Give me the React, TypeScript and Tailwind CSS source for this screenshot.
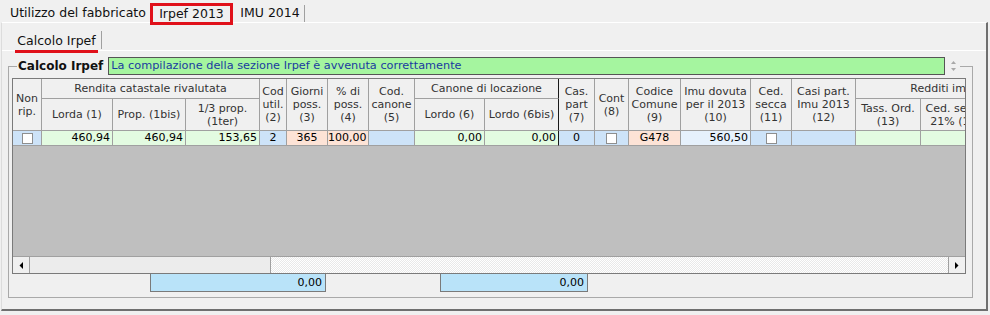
import React from "react";

const HB = "flex items-center justify-center text-center border-r border-b border-[#a0a0a0] leading-[13px] text-[#333] overflow-hidden whitespace-nowrap";
const DB = "h-[15px] border-r border-b border-[#a0a0a0] leading-[14px] overflow-hidden whitespace-nowrap text-black";

function Check() {
  return <div className="w-[11px] h-[11px] border border-[#8e8f8f] bg-white" />;
}

function Arrow({ dir }: { dir: "l" | "r" }) {
  return (
    <svg width="4" height="7" viewBox="0 0 4 7">
      <path d={dir === "l" ? "M4 0 L0.5 3.5 L4 7Z" : "M0 0 L3.5 3.5 L0 7Z"} fill="#000" />
    </svg>
  );
}

export default function App() {
  return (
    <div className="w-[990px] h-[315px] bg-[#f0f0f0] overflow-hidden font-['DejaVu_Sans',sans-serif] text-[11px] text-black">
      {/* top tabs */}
      <div className="h-[22px] flex items-start text-[12.5px]">
        <div className="ml-[10px] w-[140px] mt-[5px] leading-[15px] text-[#111] whitespace-nowrap">Utilizzo del fabbricato</div>
        <div className="relative z-10 w-[83px] h-[22px] mt-[3px] border-[3px] border-[#e0101a] flex items-center justify-center leading-[16px] text-[#111]">
          Irpef 2013
        </div>
        <div className="ml-[5px] w-[64px] mt-[5px] leading-[15px] text-[#111] text-center">IMU 2014</div>
        <div className="ml-[2px] mt-[5px] w-px h-[17px] bg-[#a0a0a0]" />
      </div>

      {/* outer panel */}
      <div className="ml-[1px] w-[987px] h-[289px] border-t border-t-white border-l border-l-[#dcdcdc] border-r-2 border-r-[#6f6f6f] border-b-2 border-b-[#6f6f6f]">
        {/* inner tabs */}
        <div className="h-[27px] flex items-end">
          <div className="relative z-10 ml-[13px] -mb-[3px] pb-[2px] border-b-[3px] border-[#e0101a] leading-[15px] text-[12.5px] text-[#111] w-[83px] text-center whitespace-nowrap">
            Calcolo Irpef
          </div>
          <div className="ml-[3px] mb-[1px] w-px h-[18px] bg-[#a0a0a0]" />
        </div>

        {/* inner panel */}
        <div className="border-t border-t-white pt-[6px]">
          <fieldset className="ml-[6px] w-[965px] border border-[#a9a9a9] pl-[3px] pr-[6px] pb-[5px] pt-[3px]">
            <legend className="ml-[5px] h-[18px] p-0">
              <div className="flex items-center h-[18px]">
                <span className="px-[1px] font-bold text-[12px] leading-[16px] text-[#111]">Calcolo Irpef</span>
                <div className="ml-[4px] w-[837px] h-[18px] bg-[#a5f59f] border border-[#555] text-[#1a3aa0] text-[11.3px] leading-[16px] pl-[2px] whitespace-nowrap overflow-hidden">
                  La compilazione della sezione Irpef è avvenuta correttamente
                </div>
                <div className="ml-[3px] w-[11px] h-[18px] flex flex-col items-center justify-center gap-[4px]">
                  <svg width="5" height="3" viewBox="0 0 5 3"><path d="M0 3 L2.5 0 L5 3Z" fill="#a8a8a8" /></svg>
                  <svg width="5" height="3" viewBox="0 0 5 3"><path d="M0 0 L2.5 3 L5 0Z" fill="#a8a8a8" /></svg>
                </div>
                <div className="w-px" />
              </div>
            </legend>

            {/* table */}
            <div className="w-[954px] h-[196px] border border-[#7a7a7a] flex flex-col">
              <div className="w-[952px] overflow-hidden">
                <div className="grid w-max grid-cols-[29px_71px_73px_74px_27px_41px_41px_46px_70px_74px_36px_34px_52px_70px_41px_64px_65px_70px_70px] grid-rows-[20px_32px_15px] bg-[#f0f0f0]">
                  <div className={`${HB} row-span-2`}>Non<br />rip.</div>
                  <div className={`${HB} col-span-3`}>Rendita catastale rivalutata</div>
                  <div className={`${HB} row-span-2`}>Cod<br />util.<br />(2)</div>
                  <div className={`${HB} row-span-2`}>Giorni<br />poss.<br />(3)</div>
                  <div className={`${HB} row-span-2`}>% di<br />poss.<br />(4)</div>
                  <div className={`${HB} row-span-2`}>Cod.<br />canone<br />(5)</div>
                  <div className={`${HB} col-span-2 border-r-[#1a1a1a]`}>Canone di locazione</div>
                  <div className={`${HB} row-span-2`}>Cas.<br />part<br />(7)</div>
                  <div className={`${HB} row-span-2`}>Cont<br />(8)</div>
                  <div className={`${HB} row-span-2`}>Codice<br />Comune<br />(9)</div>
                  <div className={`${HB} row-span-2`}>Imu dovuta<br />per il 2013<br />(10)</div>
                  <div className={`${HB} row-span-2`}>Ced.<br />secca<br />(11)</div>
                  <div className={`${HB} row-span-2`}>Casi part.<br />Imu 2013<br />(12)</div>
                  <div className={`${HB} col-span-3`}>Redditi imponibili</div>

                  <div className={HB}>Lorda (1)</div>
                  <div className={HB}>Prop. (1bis)</div>
                  <div className={HB}>1/3 prop.<br />(1ter)</div>
                  <div className={HB}>Lordo (6)</div>
                  <div className={`${HB} border-r-[#1a1a1a]`}>Lordo (6bis)</div>
                  <div className={HB}>Tass. Ord.<br />(13)</div>
                  <div className={HB}>Ced. secca<br />21% (14)</div>
                  <div className={HB}>Ced. secca<br />10% (15)</div>

                  <div className={`${DB} bg-[#cde3f8] flex items-center justify-center`}><Check /></div>
                  <div className={`${DB} bg-[#e3fbe1] text-right pr-[2px]`}>460,94</div>
                  <div className={`${DB} bg-[#e3fbe1] text-right pr-[2px]`}>460,94</div>
                  <div className={`${DB} bg-[#e3fbe1] text-right pr-[2px]`}>153,65</div>
                  <div className={`${DB} bg-[#cde3f8] text-center`}>2</div>
                  <div className={`${DB} bg-[#fde3d6] text-center`}>365</div>
                  <div className={`${DB} bg-[#fde3d6] text-right pr-[2px]`}>100,00</div>
                  <div className={`${DB} bg-[#cde3f8]`} />
                  <div className={`${DB} bg-[#e3fbe1] text-right pr-[2px]`}>0,00</div>
                  <div className={`${DB} bg-[#e3fbe1] text-right pr-[2px] border-r-[#1a1a1a]`}>0,00</div>
                  <div className={`${DB} bg-[#cde3f8] text-center`}>0</div>
                  <div className={`${DB} bg-[#cde3f8] flex items-center justify-center`}><Check /></div>
                  <div className={`${DB} bg-[#fde3d6] text-center`}>G478</div>
                  <div className={`${DB} bg-[#e6f1fc] text-right pr-[2px]`}>560,50</div>
                  <div className={`${DB} bg-[#cde3f8] flex items-center justify-center`}><Check /></div>
                  <div className={`${DB} bg-[#cde3f8]`} />
                  <div className={`${DB} bg-[#e3fbe1]`} />
                  <div className={`${DB} bg-[#e3fbe1]`} />
                  <div className={`${DB} bg-[#e3fbe1]`} />
                </div>
              </div>
              <div className="h-[110px] bg-[#bfbfbf]" />
              <div className="h-[17px] flex border-t border-[#a0a0a0]">
                <div className="w-[17px] border-r border-[#a0a0a0] bg-[#f0f0f0] flex items-center justify-center"><Arrow dir="l" /></div>
                <div className="w-[241px] bg-[#ececec] border-r border-[#a0a0a0]" />
                <div className="flex-1 bg-[repeating-conic-gradient(#e9e9e9_0%_25%,#ffffff_0%_50%)] bg-[length:2px_2px]" />
                <div className="w-[17px] border-l border-[#a0a0a0] bg-[#f0f0f0] flex items-center justify-center"><Arrow dir="r" /></div>
              </div>
            </div>

            {/* totals */}
            <div className="flex -mt-px">
              <div className="ml-[138px] w-[176px] h-[19px] bg-[#b9e3f9] border border-[#7a7a7a] text-right pr-[3px] leading-[17px]">0,00</div>
              <div className="ml-[114px] w-[148px] h-[19px] bg-[#b9e3f9] border border-[#7a7a7a] text-right pr-[3px] leading-[17px]">0,00</div>
            </div>
          </fieldset>
        </div>
      </div>
    </div>
  );
}
